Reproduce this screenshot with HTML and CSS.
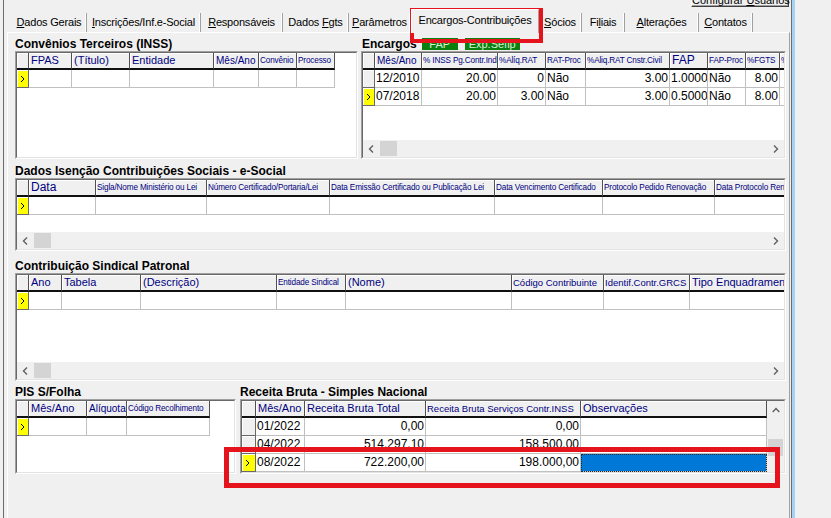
FILE: index.html
```html
<!DOCTYPE html>
<html lang="pt">
<head>
<meta charset="utf-8">
<title>Encargos-Contribuições</title>
<link rel="stylesheet" href="styles.css">
</head>
<body>
<div class="outer">
  <div class="frame">
    <div class="topbar"><div class="cfgbtn">Configurar <u>U</u>suários</div></div>
    <div class="tabs">
      <div class="tab t1"><u>D</u>ados Gerais</div>
      <div class="tab t2"><u>I</u>nscrições/Inf.e-Social</div>
      <div class="tab t3"><u>R</u>esponsáveis</div>
      <div class="tab t4">Dados <u>F</u>gts</div>
      <div class="tab t5"><u>P</u>arâmetros</div>
      <div class="tab sel">Encargos-Contribuições</div>
      <div class="tab t7"><u>S</u>ócios</div>
      <div class="tab t8">Fi<u>l</u>iais</div>
      <div class="tab t9"><u>A</u>lterações</div>
      <div class="tab t10"><u>C</u>ontatos</div>
    </div>
    <div class="panel">
      <div class="row r1">
        <section class="sec conv">
          <div class="ttl">Convênios Terceiros (INSS)</div>
          <div class="grid h108"><div class="gin">
            <div class="gbody">
              <div class="gr hd"><div class="ind"></div><div>FPAS</div><div>(Título)</div><div>Entidade</div><div class="m">Mês/Ano</div><div class="s">Convênio</div><div class="s">Processo</div></div>
              <div class="gr"><div class="ind cur"><svg class="cursor" width="5" height="8" viewBox="0 0 5 8"><polyline points="1,1 4,4 1,7" fill="none" stroke="#000" stroke-width="1"/></svg></div><div></div><div></div><div></div><div></div><div></div><div></div></div>
            </div>
          </div></div>
        </section>
        <section class="sec enc">
          <div class="ttl"><span class="ttx">Encargos</span><span class="gbtn b1">FAP</span><span class="gbtn b2">Exp.Sefip</span></div>
          <div class="grid h108"><div class="gin">
            <div class="gbody">
              <div class="gr hd"><div class="ind"></div><div class="m">Mês/Ano</div><div class="s">% INSS Pg.Contr.Ind</div><div class="s">%Alíq.RAT</div><div class="s">RAT-Proc</div><div class="s">%Aliq.RAT Cnstr.Civil</div><div class="l">FAP</div><div class="s">FAP-Proc</div><div class="s">%FGTS</div><div class="s">%</div></div>
              <div class="gr"><div class="ind"></div><div>12/2010</div><div class="r">20.00</div><div class="r">0</div><div>Não</div><div class="r">3.00</div><div>1.0000</div><div>Não</div><div class="r">8.00</div><div></div></div>
              <div class="gr"><div class="ind cur"><svg class="cursor" width="5" height="8" viewBox="0 0 5 8"><polyline points="1,1 4,4 1,7" fill="none" stroke="#000" stroke-width="1"/></svg></div><div>07/2018</div><div class="r">20.00</div><div class="r">3.00</div><div>Não</div><div class="r">3.00</div><div>0.5000</div><div>Não</div><div class="r">8.00</div><div></div></div>
            </div>
            <div class="hs"><span class="arr"><svg width="7" height="8" viewBox="0 0 7 8"><polyline points="5,0.5 1.5,4 5,7.5" fill="none" stroke="#606060" stroke-width="1.4"/></svg></span><span class="thumb"></span><span class="sp"></span><span class="arr"><svg width="7" height="8" viewBox="0 0 7 8"><polyline points="2,0.5 5.5,4 2,7.5" fill="none" stroke="#606060" stroke-width="1.4"/></svg></span></div>
          </div></div>
        </section>
      </div>

      <section class="sec isen m5">
        <div class="ttl">Dados Isenção Contribuições Sociais - e-Social</div>
        <div class="grid h73"><div class="gin">
          <div class="gbody">
            <div class="gr hd"><div class="ind"></div><div class="l">Data</div><div class="s">Sigla/Nome Ministério ou Lei</div><div class="s">Número Certificado/Portaria/Lei</div><div class="s">Data Emissão Certificado ou Publicação Lei</div><div class="s">Data Vencimento Certificado</div><div class="s">Protocolo Pedido Renovação</div><div class="s">Data Protocolo Renovação</div></div>
            <div class="gr"><div class="ind cur"><svg class="cursor" width="5" height="8" viewBox="0 0 5 8"><polyline points="1,1 4,4 1,7" fill="none" stroke="#000" stroke-width="1"/></svg></div><div></div><div></div><div></div><div></div><div></div><div></div><div></div></div>
          </div>
          <div class="hs"><span class="arr"><svg width="7" height="8" viewBox="0 0 7 8"><polyline points="5,0.5 1.5,4 5,7.5" fill="none" stroke="#606060" stroke-width="1.4"/></svg></span><span class="thumb"></span><span class="sp"></span><span class="arr"><svg width="7" height="8" viewBox="0 0 7 8"><polyline points="2,0.5 5.5,4 2,7.5" fill="none" stroke="#606060" stroke-width="1.4"/></svg></span></div>
        </div></div>
      </section>

      <section class="sec sind m8">
        <div class="ttl">Contribuição Sindical Patronal</div>
        <div class="grid h108"><div class="gin">
          <div class="gbody">
            <div class="gr hd"><div class="ind"></div><div>Ano</div><div>Tabela</div><div>(Descrição)</div><div class="s">Entidade Sindical</div><div>(Nome)</div><div class="m2">Código Contribuinte</div><div class="m2">Identif.Contr.GRCS</div><div>Tipo Enquadramento</div></div>
            <div class="gr"><div class="ind cur"><svg class="cursor" width="5" height="8" viewBox="0 0 5 8"><polyline points="1,1 4,4 1,7" fill="none" stroke="#000" stroke-width="1"/></svg></div><div></div><div></div><div></div><div></div><div></div><div></div><div></div><div></div></div>
          </div>
          <div class="hs"><span class="arr"><svg width="7" height="8" viewBox="0 0 7 8"><polyline points="5,0.5 1.5,4 5,7.5" fill="none" stroke="#606060" stroke-width="1.4"/></svg></span><span class="thumb"></span><span class="sp"></span><span class="arr"><svg width="7" height="8" viewBox="0 0 7 8"><polyline points="2,0.5 5.5,4 2,7.5" fill="none" stroke="#606060" stroke-width="1.4"/></svg></span></div>
        </div></div>
      </section>

      <div class="row r4 m4">
        <section class="sec pis">
          <div class="ttl">PIS S/Folha</div>
          <div class="grid h75"><div class="gin">
            <div class="gbody">
              <div class="gr hd"><div class="ind"></div><div>Mês/Ano</div><div class="m">Alíquota</div><div class="s">Código Recolhimento</div></div>
              <div class="gr"><div class="ind cur"><svg class="cursor" width="5" height="8" viewBox="0 0 5 8"><polyline points="1,1 4,4 1,7" fill="none" stroke="#000" stroke-width="1"/></svg></div><div></div><div></div><div></div></div>
            </div>
          </div></div>
        </section>
        <section class="sec rec">
          <div class="ttl">Receita Bruta - Simples Nacional</div>
          <div class="grid h75"><div class="gin">
            <div class="gbody rowbody">
              <div class="gtab">
                <div class="gr hd"><div class="ind"></div><div>Mês/Ano</div><div>Receita Bruta Total</div><div class="m2">Receita Bruta Serviços Contr.INSS</div><div>Observações</div></div>
                <div class="gr"><div class="ind"></div><div>01/2022</div><div class="r">0,00</div><div class="r">0,00</div><div></div></div>
                <div class="gr"><div class="ind"></div><div>04/2022</div><div class="r">514.297,10</div><div class="r">158.500,00</div><div></div></div>
                <div class="gr"><div class="ind cur"><svg class="cursor" width="5" height="8" viewBox="0 0 5 8"><polyline points="1,1 4,4 1,7" fill="none" stroke="#000" stroke-width="1"/></svg></div><div>08/2022</div><div class="r">722.200,00</div><div class="r">198.000,00</div><div class="selc"></div></div>
              </div>
              <div class="vs">
                <span class="varr"><svg width="8" height="6" viewBox="0 0 8 6"><polyline points="0.7,5 4,1.5 7.3,5" fill="none" stroke="#606060" stroke-width="1.4"/></svg></span>
                <span class="vthumb"></span>
              </div>
            </div>
          </div></div>
        </section>
      </div>
    </div>
  </div>
</div>
<div class="ann ann1"></div>
<div class="ann ann2"></div>
</body>
</html>
```

FILE: styles.css
```css
html, body { margin: 0; padding: 0; }
body {
  background: #f0f0f0;
  font-family: "Liberation Sans", Arial, sans-serif;
  font-size: 12px;
  color: #000;
  width: 831px;
  height: 518px;
  overflow: hidden;
}
.outer {
  width: 795px;
  height: 518px;
  box-sizing: border-box;
  border-right: 3px solid #a6d2f3;
}
.frame {
  margin-left: 3px;
  width: 789px;
  height: 100%;
  box-sizing: border-box;
  border-left: 1px solid #6d6d6d;
  border-right: 1px solid #6d6d6d;
}
.topbar {
  height: 8px;
  overflow: hidden;
  display: flex;
  justify-content: flex-end;
  align-items: flex-end;
  padding-right: 2px;
}
.cfgbtn {
  flex: none;
  width: 98px;
  height: 14px;
  margin-bottom: 1px;
  box-sizing: border-box;
  border: 1px solid;
  border-color: #fff #404040 #404040 #fff;
  box-shadow: inset -1px -1px 0 #a0a0a0;
  background: #f0f0f0;
  font-size: 11px;
  line-height: 12px;
  text-align: center;
  white-space: nowrap;
}
.tabs {
  height: 24px;
  display: flex;
  align-items: flex-end;
  padding-left: 8px;
}
.tab {
  flex: none;
  box-sizing: border-box;
  height: 19px;
  padding-top: 1px;
  line-height: 17px;
  text-align: center;
  font-size: 11px;
  letter-spacing: -0.2px;
  border-right: 1px solid #a0a0a0;
  box-shadow: inset -1px 0 0 #fff;
  white-space: nowrap;
  overflow: hidden;
}
.t1 { width: 75px; }
.t2 { width: 114px; }
.t3 { width: 82px; }
.t4 { width: 66px; }
.t5 { width: 62px; }
.t7 { width: 43px; }
.t8 { width: 43px; }
.t9 { width: 74px; }
.t10 { width: 54px; }
.tab.sel {
  width: 128px;
  height: 24px;
  padding-top: 2px;
  margin-bottom: -1px;
  position: relative;
  z-index: 1;
  background: #f0f0f0;
  border-left: 1px solid #fff;
  border-top: 1px solid #fff;
  box-shadow: none;
}
.panel {
  margin-left: 3px;
  width: 783px;
  height: 486px;
  box-sizing: border-box;
  border-top: 1px solid #fff;
  border-left: 1px solid #fff;
  border-right: 1px solid #a0a0a0;
  padding: 4px 3px 0 7px;
}
.row { display: flex; }
.r1 { gap: 3px; }
.r4 { gap: 4px; }
.m4 { margin-top: 4px; }
.m5 { margin-top: 5px; }
.m8 { margin-top: 8px; }
.sec { display: flex; flex-direction: column; }
.conv { width: 343px; }
.enc { width: 425px; }
.pis { width: 221px; }
.rec { width: 546px; }
.ttl {
  height: 14px;
  line-height: 14px;
  font-weight: bold;
  font-size: 12px;
  white-space: nowrap;
  display: flex;
}
.enc .ttl { padding-left: 1px; }
.gbtn {
  align-self: flex-start;
  height: 12px;
  margin-top: 1px;
  line-height: 13px;
  background: #0a800f;
  color: #d8f0d8;
  font-weight: normal;
  font-size: 11px;
  text-align: center;
  overflow: hidden;
}
.b1 { width: 36px; margin-left: 5px; }
.b2 { width: 55px; margin-left: 7px; }

.grid {
  box-sizing: border-box;
  border: 1px solid;
  border-color: #a0a0a0 #ffffff #ffffff #a0a0a0;
  background: #fff;
}
.h108 { height: 108px; }
.h73 { height: 73px; }
.h75 { height: 75px; }
.gin {
  box-sizing: border-box;
  height: 100%;
  border: 1px solid;
  border-color: #696969 #e3e3e3 #e3e3e3 #696969;
  display: flex;
  flex-direction: column;
  overflow: hidden;
}
.gbody { flex: 1; overflow: hidden; background: #fff; min-height: 0; }
.rowbody { display: flex; }
.gtab { flex: none; }

.gr { display: grid; width: max-content; }
.conv .gr { grid-template-columns: 12px 43px 58px 84px 45px 38px 38px; }
.enc .gr { grid-template-columns: 12px 47px 76px 48px 40px 84px 38px 38px 34px 40px; }
.isen .gr { grid-template-columns: 12px 67px 111px 123px 165px 108px 112px 110px; }
.sind .gr { grid-template-columns: 12px 33px 79px 136px 69px 166px 92px 86px 120px; }
.pis .gr { grid-template-columns: 12px 58px 40px 83px; }
.rec .gr { grid-template-columns: 14px 49px 121px 155px 186px; }

.gr > div {
  box-sizing: border-box;
  height: 18px;
  border-right: 1px solid #c0c0c0;
  border-bottom: 1px solid #c0c0c0;
  padding: 0 1px;
  white-space: nowrap;
  overflow: hidden;
  line-height: 17px;
  font-size: 12px;
}
.gr > .r { text-align: right; }
.gr.hd > div {
  height: 17px;
  background: #f0f0f0;
  border-right: 1px solid #505050;
  border-bottom: 2px solid #101010;
  box-shadow: inset 1px 1px 0 #fff;
  color: #000080;
  font-size: 11px;
  line-height: 15px;
  padding: 0 2px;
}
.gr.hd > .s { font-size: 8.2px; line-height: 16px; letter-spacing: -0.15px; padding: 0 1px; }
.gr.hd > .m { font-size: 10px; line-height: 15px; }
.gr.hd > .m2 { font-size: 9.5px; line-height: 15px; padding: 0 1px; }
.gr.hd > .l { font-size: 12px; line-height: 15px; }
.gr > .ind {
  padding: 0;
  background: #f0f0f0;
  border-right-color: #696969;
  border-bottom-color: #696969;
  box-shadow: inset 1px 1px 0 #fff;
  display: flex;
  align-items: center;
}
.gr > .ind.cur { background: #ffff00; }
.cursor { margin-left: 3px; display: block; }
.gr > .selc {
  background: #0078d7;
  outline: 1px dotted #2a2a2a;
  outline-offset: -1px;
}

.hs {
  flex: none;
  height: 17px;
  background: #f0f0f0;
  display: flex;
  align-items: stretch;
}
.arr {
  flex: none;
  width: 17px;
  display: flex;
  align-items: center;
  justify-content: center;
}
.thumb {
  flex: none;
  width: 17px;
  margin: 1px 0;
  background: #d4d4d4;
}
.sp { flex: 1; }
.vs {
  flex: none;
  width: 17px;
  background: #f0f0f0;
  display: flex;
  flex-direction: column;
  align-items: center;
}
.varr {
  height: 17px;
  display: flex;
  align-items: center;
  justify-content: center;
}
.vthumb {
  width: 15px;
  height: 17px;
  margin-top: 21px;
  background: #d4d4d4;
}

.ann {
  position: absolute;
  box-sizing: border-box;
  border: 4px solid #e5141c;
  pointer-events: none;
}
.ann1 { left: 410px; top: 8px; width: 133px; height: 35px; }
.ann2 { left: 224px; top: 447px; width: 556px; height: 41px; border-width: 5px; }
```
